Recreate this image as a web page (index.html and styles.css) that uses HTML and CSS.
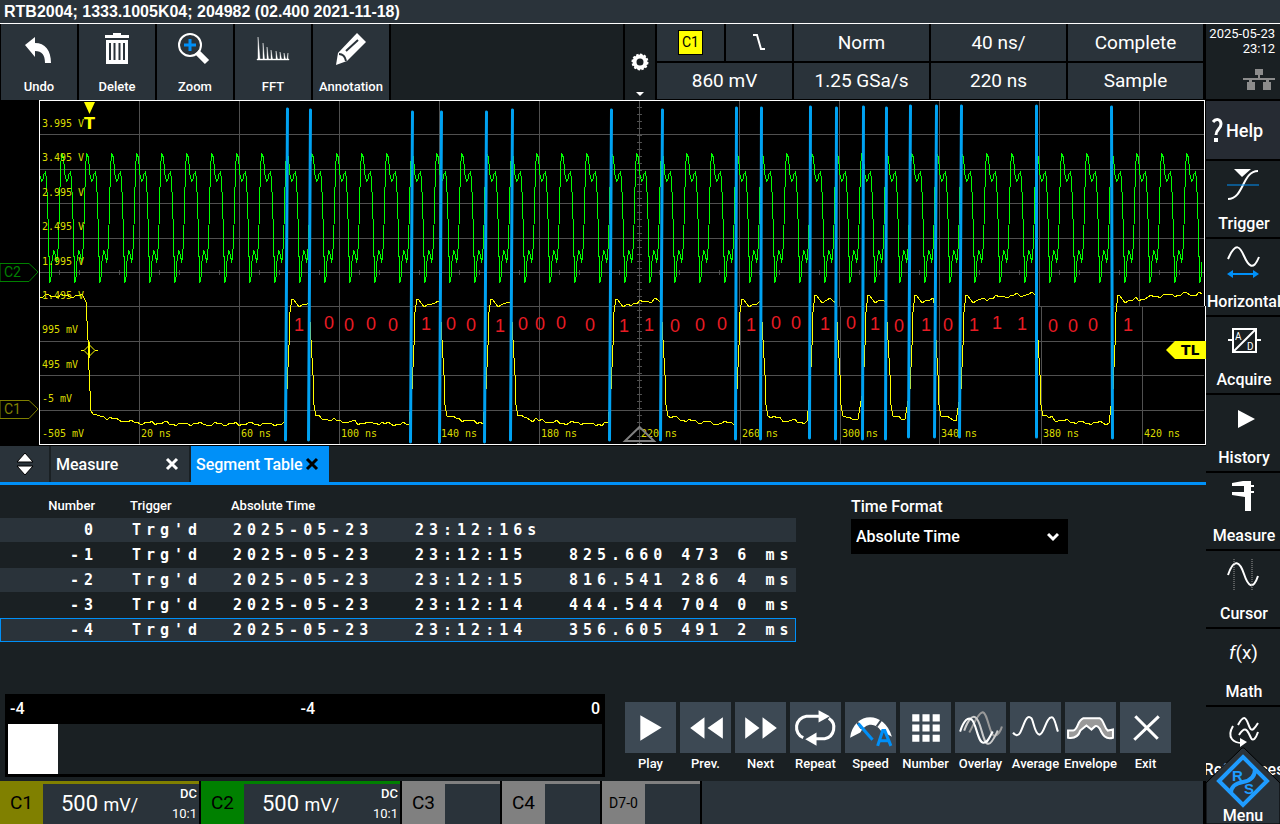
FILE: index.html
```
<!DOCTYPE html>
<html lang="en">
<head>
<meta charset="utf-8">
<title>RTB2004</title>
<link rel="stylesheet" href="styles.css">
</head>
<body>
<header class="title-bar">RTB2004; 1333.1005K04; 204982 (02.400 2021-11-18)</header>
<div class="instrument">
  <main class="work">
    <div class="toolbar">
      <button class="tool"><svg class="tool-icon" viewBox="0 0 40 40"><path d="M6 15 16 7v6c10 0 16 7 16 20h-6c0-8-3-12-10-12v6z" fill="#fff"/></svg><span>Undo</span></button>
      <button class="tool"><svg class="tool-icon" viewBox="0 0 40 40"><path d="M16 3h8v2h8v3H8V5h8zM9 10h22v24H9z" fill="#fff"/><path d="M13 13v17M17.5 13v17M22.500 13v17M27 13v17" stroke="#2a333a" stroke-width="2"/></svg><span>Delete</span></button>
      <button class="tool"><svg class="tool-icon" viewBox="0 0 40 40" fill="none"><circle cx="15" cy="15" r="11" stroke="#fff" stroke-width="2"/><path d="M9 15h12M15 9v12" stroke="#0090f8" stroke-width="3"/><path d="m22 22 10 10" stroke="#fff" stroke-width="6"/></svg><span>Zoom</span></button>
      <button class="tool"><svg class="tool-icon" viewBox="0 0 40 40"><path d="M4 29h32v1H4zM5 7l2 22H5zM10 13l1.500 16H10zM14 17l1.500 12H14zM18 20l1.500 9H18zM23 21l1.500 8H23zM27 22l1.500 7H27zM31 23l1.500 6H31zM35 23v6h-1z" fill="#fff" stroke="#fff" stroke-width=".4"/></svg><span>FFT</span></button>
      <button class="tool"><svg class="tool-icon" viewBox="0 0 40 40"><path d="m26 3 9 9-19 19-11 4 2-12z" fill="#fff"/><path d="m15 21 12-11M8 24c3 0 6 2 7 7" stroke="#2a333a" stroke-width="2" fill="none"/></svg><span>Annotation</span></button>
      <div class="tool-space"></div>
      <button class="settings" aria-label="Toolbar settings"><svg viewBox="0 0 20 20" width="20" height="20"><circle cx="10" cy="10" r="5.500" fill="none" stroke="#fff" stroke-width="4"/><circle cx="10" cy="10" r="7.500" fill="none" stroke="#fff" stroke-width="2" stroke-dasharray="2.400 1.500"/></svg><svg class="settings-arrow" viewBox="0 0 8 4" width="8" height="4"><path d="M0 0h8L4 4z" fill="#fff"/></svg></button>
      <div class="status">
        <div class="status-cell half"><span class="source">C1</span></div>
        <div class="status-cell half"><svg viewBox="0 0 16 20" width="16" height="20"><path d="M2 3h4l4 14h4" fill="none" stroke="#fff" stroke-width="2"/></svg></div>
        <div class="status-cell">Norm</div><div class="status-cell">40 ns/</div><div class="status-cell">Complete</div>
        <div class="status-cell">860 mV</div><div class="status-cell">1.25 GSa/s</div><div class="status-cell">220 ns</div><div class="status-cell">Sample</div>
      </div>
    </div>

    <svg class="scope" id="scope" viewBox="0 100 1206 346" role="img" aria-label="Waveforms"></svg>

    <section class="panel">
      <nav class="tabs">
        <button class="tab-order" aria-label="Resize panel"><svg viewBox="0 0 18 24" width="18" height="24"><path d="M9 1l8 9H1zM9 23l8-9H1z" fill="#fff" stroke="#000"/></svg></button>
        <button class="tab">Measure <svg viewBox="0 0 14 14" width="14" height="14"><path d="m2 2 10 10M12 2 2 12" stroke="#fff" stroke-width="3"/></svg></button>
        <button class="tab active">Segment Table <svg viewBox="0 0 14 14" width="14" height="14"><path d="m2 2 10 10M12 2 2 12" stroke="#000" stroke-width="3"/></svg></button>
      </nav>
      <div class="panel-body">
        <table class="segments">
          <colgroup><col class="col-number"><col class="col-trigger"><col class="col-date"><col class="col-time"><col></colgroup>
          <thead><tr><th class="num">Number</th><th>Trigger</th><th colspan="3">Absolute Time</th></tr></thead>
          <tbody>
            <tr><td class="num">0</td><td>Trg'd</td><td>2025-05-23</td><td>23:12:16s</td><td></td></tr>
            <tr><td class="num">-1</td><td>Trg'd</td><td>2025-05-23</td><td>23:12:15</td><td>825.660 473 6 ms</td></tr>
            <tr><td class="num">-2</td><td>Trg'd</td><td>2025-05-23</td><td>23:12:15</td><td>816.541 286 4 ms</td></tr>
            <tr><td class="num">-3</td><td>Trg'd</td><td>2025-05-23</td><td>23:12:14</td><td>444.544 704 0 ms</td></tr>
            <tr class="selected"><td class="num">-4</td><td>Trg'd</td><td>2025-05-23</td><td>23:12:14</td><td>356.605 491 2 ms</td></tr>
          </tbody>
        </table>
        <div class="format">
          <label for="time-format">Time Format</label>
          <div class="select-wrap">
            <select id="time-format"><option>Absolute Time</option></select>
            <svg class="select-arrow" viewBox="0 0 12 10" width="12" height="10"><path d="m1 2 5 5 5-5" fill="none" stroke="#fff" stroke-width="3"/></svg>
          </div>
        </div>
      </div>
      <div class="player">
        <div class="timeline">
          <div class="timeline-head"><span>-4</span><span>-4</span><span>0</span></div>
          <div class="timeline-track"><div class="timeline-thumb"></div></div>
        </div>
        <div class="actions">
          <button class="action"><span class="action-icon"><svg viewBox="0 0 50 50"><path d="m15 13 21 12-21 13z" fill="#fff"/></svg></span>Play</button>
          <button class="action"><span class="action-icon"><svg viewBox="0 0 50 50"><path d="M24 15v21L10 25.500zM42 15v21L27 25.500z" fill="#fff"/></svg></span>Prev.</button>
          <button class="action"><span class="action-icon"><svg viewBox="0 0 50 50"><path d="M10 15v21l14-10.500zM27 15v21l14-10.500z" fill="#fff"/></svg></span>Next</button>
          <button class="action"><span class="action-icon"><svg viewBox="0 0 50 50"><path d="M35 14H16a11 11 0 0 0-3 21M22 36h12a11 11 0 0 0 4-20" fill="none" stroke="#fff" stroke-width="3"/><path d="m28 8 11 6-11 6zM26 30v13l-11-6.500z" fill="#fff"/></svg></span>Repeat</button>
          <button class="action"><span class="action-icon"><svg viewBox="0 0 50 50"><path d="M5 35C8 10 38 7 46 34l-11-6C30 20 20 20 15 30z" fill="#fff"/><path d="m12 20 4 6M36 17l-5 7" stroke="#3d4954" stroke-width="2"/><path d="m13 21 14 16" stroke="#0090f8" stroke-width="3"/><path d="m32 43 5-15h2l6 15M34 38h9" fill="none" stroke="#0090f8" stroke-width="3"/></svg></span>Speed</button>
          <button class="action"><span class="action-icon"><svg viewBox="0 0 50 50"><path d="M12 12h7v7h-7zM22 12h7v7h-7zM32 12h7v7h-7zM12 22h7v7h-7zM22 22h7v7h-7zM32 22h7v7h-7zM12 32h7v7h-7zM22 32h7v7h-7zM32 32h7v7h-7z" fill="#fff"/></svg></span>Number</button>
          <button class="action"><span class="action-icon"><svg viewBox="0 0 50 50" fill="none" stroke-width="2"><path d="M14 30c4-7 8-19 13-20 5 0 7 24 12 23 3 0 6-5 7-9" stroke="#999"/><path d="M9 28c4-11 8-15 11-13 6 3 7 27 13 26 3 0 6-7 9-13" stroke="#ccc"/><path d="M5 29c4-12 8-14 11-12 5 3 6 23 12 23 4 0 5-4 9-11" stroke="#fff"/></svg></span>Overlay</button>
          <button class="action"><span class="action-icon"><svg viewBox="0 0 50 50"><path d="M3 30c2 3 5 4 7 0 4-8 6-19 11-14 2 2 3 16 8 16 5-1 6-17 12-17 3 0 4 9 6 14" fill="none" stroke="#fff" stroke-width="2"/></svg></span>Average</button>
          <button class="action"><span class="action-icon"><svg viewBox="0 0 50 50"><path d="M3 28h5c5-1 4-10 10-12h16c4 1 4 9 8 12l5-1v8c-7 2-10-2-13-9-3-4-4-3-8 1l-5-4-6 5c-2 6-6 8-12 7z" fill="#999" stroke="#fff" stroke-width="2"/></svg></span>Envelope</button>
          <button class="action"><span class="action-icon"><svg viewBox="0 0 50 50"><path d="m15 14 22 22M38 14 14 37" stroke="#fff" stroke-width="3"/></svg></span>Exit</button>
        </div>
      </div>
    </section>

    <footer class="channels">
      <button class="channel yellow wide"><span class="channel-name">C1</span><span class="channel-scale">500 <small>mV/</small></span><span class="channel-mode"><b>DC</b><span>10:1</span></span></button>
      <button class="channel green wide"><span class="channel-name">C2</span><span class="channel-scale">500 <small>mV/</small></span><span class="channel-mode"><b>DC</b><span>10:1</span></span></button>
      <button class="channel"><span class="channel-name">C3</span></button>
      <button class="channel"><span class="channel-name">C4</span></button>
      <button class="channel"><span class="channel-name logic">D7-0</span></button>
      <div class="channel-space"></div>
    </footer>
  </main>

  <aside class="side">
    <div class="clock"><span>2025-05-23</span><span>23:12</span><svg viewBox="0 0 32 22" width="32" height="22"><path d="M12 0h8v6h-3v3h15v2h-6v2h2v8h-8v-8h3v-2H9v2h3v8H4v-8h2v-2H0V9h15V6h-3z" fill="#8c8c8c"/></svg></div>
    <button class="help"><svg viewBox="0 0 12 26" width="12" height="26"><path d="M2 5c3-4 8-3 8 2s-5 5-5 11" fill="none" stroke="#fff" stroke-width="3"/><path d="M3 21h4v4H3z" fill="#fff"/></svg>Help</button>
    <button class="key"><svg viewBox="0 0 36 36"><path d="M2 32c16 0 14-28 30-28" fill="none" stroke="#fff" stroke-width="2"/><path d="M8 2h17l-9 8z" fill="#fff"/><path d="M1 18h32" stroke="#0090f8"/></svg><span>Trigger</span></button>
    <button class="key"><svg viewBox="0 0 36 36"><path d="M2 14C10-4 14 2 18 11s9 16 15 1" fill="none" stroke="#fff" stroke-width="2"/><path d="M6 29h24" stroke="#0090f8" stroke-width="2"/><path d="m1 29 6-4v8zM33 29l-6-4v8z" fill="#0090f8"/></svg><span>Horizontal</span></button>
    <button class="key"><svg viewBox="0 0 36 36"><path d="M7 6h23v23H7zM7 29 30 6M2 17h5M30 17h5" fill="none" stroke="#fff" stroke-width="2"/><text x="9" y="17" class="icon-text">A</text><text x="21" y="27" class="icon-text">D</text></svg><span>Acquire</span></button>
    <button class="key"><svg viewBox="0 0 36 36"><path d="m12 9 17 9-17 9z" fill="#fff"/></svg><span>History</span></button>
    <button class="key"><svg viewBox="0 0 36 36"><path d="m6 4 11-2h8v4h3v2h-3v4h3v2h-3v18h-6V18L6 16v-3h12V7H6z" fill="#fff"/></svg><span>Measure</span></button>
    <button class="key"><svg viewBox="0 0 36 36"><path d="M2 18C8 0 14 5 18 17s9 17 14 2" fill="none" stroke="#fff" stroke-width="2"/><path d="M8 2v32M26 2v32" stroke="#999" stroke-dasharray="1 1"/></svg><span>Cursor</span></button>
    <button class="key"><svg viewBox="0 0 36 36"><text x="3" y="24" class="math-text"><tspan class="math-f">f</tspan>(x)</text></svg><span>Math</span></button>
    <button class="key"><svg viewBox="0 0 36 36" fill="none" stroke="#fff" stroke-width="2"><path d="M12 12c8-15 9-2 12 3 2 4 5 0 8-5M13 22c7-11 9-3 12 3 2 4 5 0 7-6M7 13c-7 12 1 17 9 17"/><path d="m14 25 7 4-7 5z" fill="#fff" stroke="none"/></svg><span>References</span></button>
    <button class="menu"><svg class="menu-shape" viewBox="0 0 74 78" preserveAspectRatio="none"><path d="M0 37 36 2h2l36 35v41H0z" fill="#2a333a" stroke="#000"/></svg><svg class="logo" viewBox="0 0 54 54"><path d="M27 3 51 27 27 51 3 27zM15 39Q15 30 27 28T39 15" fill="none" stroke="#1f9cff" stroke-width="4"/><text x="16" y="27" class="logo-text">R</text><text x="28" y="40" class="logo-text">S</text></svg><span>Menu</span></button>
  </aside>
</div>
<script src="scope.js"></script>
</body>
</html>
```
FILE: styles.css
```
* { box-sizing: border-box; }
:root {
  --dark: #1a2023;
  --cell: #2a333a;
  --blue: #0090f8;
  --ui: Roboto, "Open Sans", sans-serif;
}
body { margin: 0; min-height: 100vh; background: #000; color: #fff; font-family: var(--ui); font-size: 16px; font-weight: 500; display: flex; flex-direction: column; }
button, select { font: inherit; color: inherit; border: 0; margin: 0; padding: 0; border-radius: 0; background: none; }
svg { display: block; }
.title-bar { height: 24px; line-height: 24px; padding-left: 4px; background: var(--cell); border-bottom: 1px solid #fff; font-family: "Liberation Sans", sans-serif; font-weight: 700; font-size: 16px; }
.instrument { flex: 1; display: grid; grid-template-columns: minmax(0, 1fr) 74px; }
.work { display: flex; flex-direction: column; min-width: 0; }

.toolbar { display: flex; gap: 2px; height: 76px; padding: 0 3px 0 1px; }
.tool { width: 76px; background: var(--cell); display: flex; flex-direction: column; align-items: center; justify-content: space-between; padding: 6px 0 4px; font-size: 13px; line-height: 18px; }
.tool-icon { width: 40px; height: 40px; }
.tool-space { flex: 1; background: var(--dark); }
.settings { width: 30px; background: var(--dark); display: flex; flex-direction: column; align-items: center; justify-content: flex-end; gap: 20px; padding-bottom: 4px; }
.status { display: grid; grid-template-columns: 67px 66px repeat(3, 135px); grid-template-rows: 1fr 1fr; gap: 2px; padding-bottom: 1px; }
.status-cell { background: var(--cell); display: flex; align-items: center; justify-content: center; font-size: 19px; font-weight: 400; }
.status-cell:nth-child(6) { grid-column: span 2; }
.source { width: 25px; height: 25px; background: #ff0; border: 1px solid #000; color: #000; font-size: 14px; line-height: 23px; text-align: center; }

.scope { width: 100%; background: #000; }
.grid { stroke: #505050; stroke-width: 1; fill: none; shape-rendering: crispEdges; }
.frame { stroke: #fff; stroke-width: 1; fill: none; shape-rendering: crispEdges; }
.trace { fill: none; stroke-width: 1; shape-rendering: crispEdges; }
.trace-1 { stroke: #ff0; }
.trace-2 { stroke: #0f0; }
.bit-edge { stroke: #00a2f2; stroke-width: 3; stroke-linecap: round; }
.bit { fill: #e81c24; font: 18px "Liberation Sans", sans-serif; text-anchor: middle; }
.scale-label { fill: #dcdc00; font: 10px "DejaVu Sans Mono", monospace; }
.tag { font: 14px Roboto, sans-serif; }
.mark { font: bold 14px "DejaVu Sans", sans-serif; }
.mark-large { font-size: 16px; }

.panel { flex: 1; background: var(--dark); display: flex; flex-direction: column; }
.tabs { display: flex; gap: 2px; height: 39px; border-bottom: 3px solid var(--blue); }
.tab-order { width: 49px; background: var(--cell); display: flex; align-items: center; justify-content: center; }
.tab { width: 138px; background: var(--cell); display: flex; align-items: center; justify-content: space-between; padding: 0 10px 0 5px; font-size: 16px; white-space: nowrap; }
.active { background: var(--blue); }
.panel-body { display: flex; gap: 55px; padding-top: 8px; }
.segments { width: 796px; table-layout: fixed; border-collapse: separate; border-spacing: 0 1px; }
.segments th { height: 23px; padding: 0; text-align: left; font-size: 13px; font-weight: 500; line-height: 23px; }
.segments td { height: 24px; padding: 0 0 0 2px; white-space: pre; font: bold 15px/24px "DejaVu Sans Mono", monospace; letter-spacing: 5px; }
.segments th.num { text-align: right; padding-right: 35px; }
.segments td.num { text-align: right; padding-right: 32px; }
.segments tbody tr:nth-child(odd) { background: var(--cell); }
.segments .selected { outline: 1px solid var(--blue); outline-offset: -1px; }
.col-number { width: 130px; }
.col-trigger { width: 101px; }
.col-date { width: 182px; }
.col-time { width: 154px; }
.format { width: 217px; padding-top: 2px; font-size: 16px; line-height: 24px; }
.select-wrap { position: relative; }
.select-wrap select { appearance: none; width: 100%; height: 35px; background: #000; padding: 0 5px; }
.select-arrow { position: absolute; right: 9px; top: 13px; }

.player { margin-top: auto; display: flex; gap: 20px; padding: 0 0 4px 5px; align-items: flex-end; }
.timeline { width: 600px; background: #000; padding: 0 3px 3px; }
.timeline-head { display: flex; justify-content: space-between; height: 30px; line-height: 30px; padding: 0 2px; font-size: 16px; }
.timeline-track { background: var(--dark); height: 50px; }
.timeline-thumb { width: 50px; height: 50px; background: #fff; }
.actions { display: flex; gap: 4px; padding-bottom: 2px; }
.action { width: 51px; display: flex; flex-direction: column; align-items: center; font-size: 13px; line-height: 22px; white-space: nowrap; }
.action-icon { width: 51px; height: 51px; background: #3d4954; }
.action-icon svg { width: 51px; height: 51px; }

.channels { display: flex; gap: 2px; height: 43px; padding-right: 3px; }
.channel { --tone: #808080; width: 98px; background: var(--cell); border-top: 3px solid var(--tone); display: flex; align-items: stretch; }
.wide { width: 199px; }
.yellow { --tone: #808000; }
.green { --tone: #008000; }
.channel-name { width: 43px; background: var(--tone); color: #000; font-size: 19px; font-weight: 400; line-height: 38px; text-align: center; }
.logic { font-size: 14px; }
.channel-scale { flex: 1; padding-left: 18px; font-size: 22px; font-weight: 400; line-height: 40px; text-align: left; white-space: nowrap; }
.channel-scale small { font-size: 18px; }
.channel-mode { display: flex; flex-direction: column; justify-content: space-between; padding-right: 2px; text-align: right; font-size: 13px; line-height: 20px; font-weight: 400; }
.channel-mode b { font-weight: 500; }
.channel-space { flex: 1; background: var(--cell); }

.side { display: flex; flex-direction: column; gap: 2px; position: relative; overflow: hidden; }
.clock { height: 75px; background: var(--dark); display: flex; flex-direction: column; align-items: flex-end; padding: 2px 5px 8px 0; font-size: 13px; line-height: 15px; font-weight: 400; white-space: nowrap; }
.clock svg { margin-top: auto; }
.help { height: 58px; background: #262b33; display: flex; align-items: center; gap: 3px; padding-left: 5px; font-size: 18px; }
.key { height: 76px; background: var(--dark); display: flex; flex-direction: column; align-items: center; justify-content: space-between; padding: 6px 0 3px 2px; font-size: 16px; line-height: 20px; overflow: hidden; }
.key svg { width: 36px; height: 36px; }
.icon-text { font-size: 10px; font-weight: 400; fill: #fff; }
.math-text { font-size: 19px; font-weight: 400; fill: #fff; }
.math-f { font-style: italic; }
.menu { position: absolute; left: 0; right: 0; bottom: 0; height: 78px; display: flex; flex-direction: column; align-items: center; justify-content: flex-end; line-height: 16px; font-size: 16px; }
.menu-shape { position: absolute; inset: 0; width: 100%; height: 100%; }
.logo { position: relative; width: 54px; height: 54px; }
.menu span { position: relative; }
.logo-text { font: 900 15px "Liberation Sans", sans-serif; fill: #1f9cff; }
```
FILE: scope.js
```
const scope = document.getElementById('scope');
const parts = [];
const add = s => parts.push(s);
const noise = x => Math.round(Math.sin(x * 0.9) * 1.2 + Math.sin(x * 0.37) * 1.3);

// Graticule
let grid = '';
for (const y of [134, 169, 203, 238, 272, 306, 341, 375, 410]) grid += `M40 ${y}H1204`;
const columns = [139, 239, 339, 439, 539, 639, 739, 839, 939, 1039, 1139];
const lower = [139, 239, 339, 439, 539, 639, 740, 840, 939, 1041, 1142];
columns.forEach((x, i) => { grid += `M${x} 101V306M${lower[i]} 306V444`; });
for (let x = 59; x < 1200; x += 20) grid += `M${x} 270V275`;
for (let y = 107; y < 444; y += 7) grid += `M637 ${y}H642`;
add(`<path class="grid" d="${grid}"/>`);
add('<path class="frame" d="M1204 306V100H39V444H1205V306"/>');

// Channel 2: clock with ringing, one period every 25 units
const shape = [[0,153],[1.7,158],[3.3,176],[4.7,181],[6,180],[7.3,174],[8.7,172],[9.7,180],[11,210],[12,250],[13,282],[14,281],[15,262],[17,251],[18.3,254],[19.7,261],[20.7,258],[21.7,240],[22.7,210],[23.3,183],[24,163]];
let clock = '';
for (let k = 0; k < 47; k++) {
  for (const [dx, y] of shape) {
    const x = 36.8 + k * 25 + dx;
    if (x >= 40 && x <= 1203) clock += `${clock ? 'L' : 'M'}${x.toFixed(1)} ${y}`;
  }
}
add(`<path class="trace trace-2" d="${clock}"/>`);

// Channel 1: data signal; each pair is a rising and a falling edge
const edges = [[286,309],[411,440],[485,511],[610,661],[736,761],[809,836],[862,886],[909,934],[960,1036],[1112,1204]];
let data = 'M40 297';
for (let x = 43; x < 84; x += 3) data += `L${x} ${296 + noise(x)}`;
data += 'L86 302L88 340L89 370L91 411L93 414';
const low = (from, to) => {
  for (let x = from; x < to - 1; x += 3) data += `L${x} ${Math.round(424 - 7 * Math.exp(-(x - from) / 25)) + noise(x)}`;
};
low(104, 286);
edges.forEach(([up, down], i) => {
  const top = i > 4 ? 295 : 299;
  data += `L${up + 1} 390L${up + 3} 345L${up + 4} 312L${up + 6} ${top}L${up + 8} ${top + 1}L${up + 13} ${top + 8}L${up + 18} ${top + 5}`;
  for (let x = up + 21; x < down; x += 3) data += `L${x} ${Math.round(top + 5 - 7 * (1 - Math.exp(-(x - up - 21) / 30))) + noise(x)}`;
  if (down < 1200) {
    data += `L${down} 303L${down + 2} 340L${down + 4} 375L${down + 5} 405L${down + 7} 416`;
    low(down + 10, edges[i + 1][0]);
  }
});
add(`<path class="trace trace-1" d="${data}"/>`);

// Channel scale labels
['3.995 V', '3.495 V', '2.995 V', '2.495 V', '1.995 V', '1.495 V', '995 mV', '495 mV', '-5 mV', '-505 mV']
  .forEach((t, i) => add(`<text class="scale-label" x="42" y="${[127, 161, 196, 230, 265, 299, 333, 368, 402, 437][i]}">${t}</text>`));
lower.forEach((x, i) => add(`<text class="scale-label" x="${x + 2}" y="437">${20 + i * 40} ns</text>`));

// Bit boundaries and decoded bits
for (const [x1, y1, x2, y2] of [
  [287.5,109,285.5,440],[310.5,110,308.5,440],[412.5,112,410.5,442],[441.5,112,439.5,442],[486.5,112,484.5,442],
  [512.5,110,510.5,440],[611.5,110,609.5,440],[662.5,110,660.5,440],[736.5,108,735.5,439],[761.5,108,760.5,439],
  [810.5,107,809.5,438],[836.5,108,835.5,439],[863.5,107,862.5,439],[886.5,108,885.5,439],[910.5,106,908.5,437],
  [936.5,106,934.5,437],[961.5,106,959.5,437],[1036.5,106,1036.5,437],[1111.5,107,1112.5,438]])
  add(`<line class="bit-edge" x1="${x1}" y1="${y1}" x2="${x2}" y2="${y2}"/>`);
const bits = '1 0 0 0 0 1 0 0 1 0 0 0 0 1 1 0 0 0 1 0 0 1 0 1 0 1 0 1 1 1 0 0 0 1'.split(' ');
const at = [[299,325],[329,323],[349,325],[371,324],[393,325],[426,324],[451,324],[471,325],[500,326],[523,324],[540,324],[561,323],[590,325],[624,326],[649,325],[675,326],[700,325],[722,324],[751,325],[776,323],[796,323],[825,324],[851,323],[875,324],[899,326],[926,325],[948,325],[974,325],[997,323],[1022,324],[1053,326],[1073,326],[1093,325],[1128,325]];
bits.forEach((b, i) => add(`<text class="bit" x="${at[i][0]}" y="${at[i][1] + 6}">${b}</text>`));

// Channel, trigger and reference markers
add('<path d="M0 263.500H29L38 272 29 281.500H0z" fill="none" stroke="#008000"/><text class="tag" x="4" y="277" fill="#008000">C2</text>');
add('<path d="M0 400.500H29L38 409 29 418.500H0z" fill="none" stroke="#808000"/><text class="tag" x="4" y="414" fill="#808000">C1</text>');
add('<path d="M84 102H95L89.500 114z" fill="#ff0"/><text class="mark mark-large" x="84" y="129" fill="#ff0">T</text>');
add('<path d="M81 350.500H84M95 350.500H98M89.500 345 95 350.500 89.500 356 84 350.500zM89.500 342V358" fill="none" stroke="#ff0"/>');
add('<path d="M639.500 427 654 441H625z" fill="none" stroke="#808080" stroke-width="2"/>');
add('<path d="M1166 350 1175 341H1206V359H1175z" fill="#ff0"/><text class="mark" x="1181" y="355" fill="#000">TL</text>');
scope.innerHTML = parts.join('');
```
